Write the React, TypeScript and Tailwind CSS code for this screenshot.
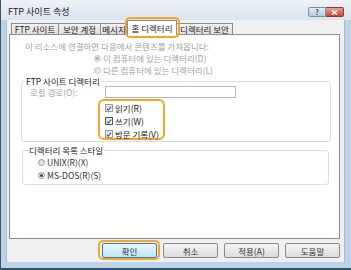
import React from "react";

function CheckBox({ green = false }: { green?: boolean }) {
  return (
    <span
      className={`w-[8px] h-[8px] shrink-0 flex items-center justify-center border ${
        green ? "border-[#3d5b80]" : "border-[#9a9a9a]"
      } bg-linear-to-br from-[#dcdcdc] to-[#fafafa]`}
    >
      <svg viewBox="0 0 8 8" className="w-[7px] h-[7px]">
        <path
          d="M1.2 4.2 L3.1 6.2 L6.9 1.4"
          stroke={green ? "#2f8a3c" : "#3a5a9a"}
          strokeWidth="1.4"
          fill="none"
        />
      </svg>
    </span>
  );
}

function Radio({ checked = false, disabled = false }: { checked?: boolean; disabled?: boolean }) {
  return (
    <span
      className={`w-[7px] h-[7px] shrink-0 rounded-full border flex items-center justify-center ${
        disabled ? "border-[#c4c4c4]" : "border-[#959595]"
      } bg-linear-to-br from-[#d8d8d8] to-[#f8f8f8]`}
    >
      {checked && (
        <span
          className={`w-[3px] h-[3px] rounded-full ${disabled ? "bg-[#a8a8a8]" : "bg-[#1f4c7a]"}`}
        />
      )}
    </span>
  );
}

function Btn({ label, focus = false }: { label: string; focus?: boolean }) {
  return (
    <div className="relative w-[55px] h-[15px]">
      <div
        className={`w-full h-full rounded-[2px] border flex items-center justify-center text-[8.5px] leading-[10px] text-[#333] ${
          focus
            ? "border-[#3c7fb1] bg-linear-to-b from-[#eaf6fd] to-[#bee6fd]"
            : "border-[#8c8c8c] bg-linear-to-b from-[#f4f4f4] to-[#dcdcdc]"
        }`}
      >
        {label}
      </div>
      {focus && (
        <div className="absolute -left-[4px] -right-[3px] -top-[3px] -bottom-[2px] border-2 border-[#f5a623] rounded-[5px]" />
      )}
    </div>
  );
}

function Tab({ label, w, selected = false }: { label: string; w: string; selected?: boolean }) {
  if (selected) {
    return (
      <div
        className={`relative z-10 ${w} h-[15px] -mb-[1px] -ml-[1px] bg-white border border-b-0 border-[#898c95] flex items-center justify-center text-[8.5px] leading-[10px] text-[#222] whitespace-nowrap`}
      >
        {label}
        <div className="absolute -left-[3px] -right-[4px] -top-[4px] -bottom-[3px] border-2 border-[#f5a623] rounded-[5px]" />
      </div>
    );
  }
  return (
    <div
      className={`${w} h-[11px] -ml-[1px] first:ml-0 border border-b-0 border-[#898c95] bg-linear-to-b from-[#f2f2f2] to-[#e0e0e0] flex items-center justify-center text-[8.5px] leading-[10px] text-[#222] whitespace-nowrap overflow-hidden`}
    >
      {label}
    </div>
  );
}

export default function App() {
  return (
    <div className="w-[351px] h-[270px] flex flex-col bg-[#bed3ea] border-l border-l-[#46515c] border-b-2 border-b-[#2e5868] font-[family-name:'Noto_Sans_CJK_KR','Noto_Sans',sans-serif] overflow-hidden">
      {/* Title bar */}
      <div className="h-[20px] shrink-0 flex items-start bg-linear-to-b from-[#eef2f6] to-[#dbe4ee]">
        <span className="ml-[7px] mt-[6px] text-[9px] leading-[12px] text-[#222]">FTP 사이트 속성</span>
        <div className="ml-auto mr-[7px] mt-[7px] flex">
          <div className="w-[18px] h-[10px] rounded-l-[2px] border border-[#7a8ea6] bg-linear-to-b from-[#e4ecf5] to-[#b7c9dd] flex items-center justify-center text-[7px] leading-[8px] text-[#2c3e55] font-bold">
            ?
          </div>
          <div className="w-[18px] h-[10px] rounded-r-[2px] border border-l-0 border-[#8c3a32] bg-linear-to-b from-[#e8a193] to-[#c5453a] flex items-center justify-center">
            <svg viewBox="0 0 8 6" className="w-[7px] h-[5px]">
              <path d="M1 0.5 L7 5.5 M7 0.5 L1 5.5" stroke="white" strokeWidth="1.6" />
            </svg>
          </div>
        </div>
      </div>

      {/* Middle */}
      <div className="flex flex-1 min-h-0">
        <div className="w-[5px] shrink-0" />
        <div className="w-[339px] shrink-0 bg-[#f0f0f0] border-x border-[#a9bdd3] flex flex-col pl-[2px] pr-[4px]">
          {/* Tabs */}
          <div className="h-[14px] shrink-0 flex items-end pl-[2px]">
            <Tab label="FTP 사이트" w="w-[48px]" />
            <Tab label="보안 계정" w="w-[43px]" />
            <Tab label="메시지" w="w-[28px]" />
            <Tab label="홈 디렉터리" w="w-[50px]" selected />
            <Tab label="디렉터리 보안" w="w-[57px]" />
          </div>

          {/* Panel */}
          <div className="h-[205px] shrink-0 bg-white border border-[#898c95] flex flex-col">
            <div className="mt-[6px] ml-[15px] h-[11px] text-[8.5px] leading-[11px] text-[#a3a3a3] whitespace-nowrap">
              이 리소스에 연결하면 다음에서 콘텐츠를 가져옵니다:
            </div>
            <div className="ml-[84px] h-[12px] flex items-center gap-[2px] text-[8.5px] leading-[12px] text-[#a3a3a3]">
              <Radio checked disabled />
              <span>이 컴퓨터에 있는 디렉터리(D)</span>
            </div>
            <div className="ml-[84px] h-[12px] flex items-center gap-[2px] text-[8.5px] leading-[12px] text-[#a3a3a3]">
              <Radio disabled />
              <span>다른 컴퓨터에 있는 디렉터리(L)</span>
            </div>

            {/* Group 1 */}
            <div className="mt-[5px] ml-[11px] w-[310px] h-[61px] shrink-0 border border-[#d5dfe5] rounded-[3px] flex flex-col">
              <span className="-mt-[7px] ml-[3px] px-[1px] w-fit bg-white text-[8.5px] leading-[12px] text-[#222]">
                FTP 사이트 디렉터리
              </span>
              <div className="-mt-[1px] h-[12px] flex items-center">
                <span className="ml-[8px] w-[75px] text-[8.5px] leading-[12px] text-[#a3a3a3]">로컬 경로(O):</span>
                <div className="w-[131px] h-[12px] border border-[#b5b9c0] bg-white" />
              </div>
              <div className="mt-[1px] ml-[76px] w-[67px] h-[41px] border-2 border-[#f5a623] rounded-[6px] flex flex-col gap-[1px] pl-[5px] pt-[1px]">
                <div className="h-[12px] flex items-center gap-[2px] text-[8.5px] leading-[12px] text-[#222] whitespace-nowrap">
                  <CheckBox />
                  <span>읽기(R)</span>
                </div>
                <div className="h-[12px] flex items-center gap-[2px] text-[8.5px] leading-[12px] text-[#222] whitespace-nowrap">
                  <CheckBox green />
                  <span>쓰기(W)</span>
                </div>
                <div className="h-[12px] flex items-center gap-[2px] text-[8.5px] leading-[12px] text-[#222] whitespace-nowrap">
                  <CheckBox />
                  <span>방문 기록(V)</span>
                </div>
              </div>
            </div>

            {/* Group 2 */}
            <div className="mt-[8px] ml-[12px] w-[307px] h-[35px] shrink-0 border border-[#d5dfe5] rounded-[3px] flex flex-col">
              <span className="-mt-[7px] ml-[5px] px-[1px] w-fit bg-white text-[8.5px] leading-[12px] text-[#222]">
                디렉터리 목록 스타일
              </span>
              <div className="flex flex-col gap-[1px] pl-[15px]">
                <div className="h-[12px] flex items-center gap-[2px] text-[8.5px] leading-[12px] text-[#333]">
                  <Radio />
                  <span>UNIX(R)(X)</span>
                </div>
                <div className="h-[12px] flex items-center gap-[2px] text-[8.5px] leading-[12px] text-[#333]">
                  <Radio checked />
                  <span>MS-DOS(R)(S)</span>
                </div>
              </div>
            </div>
          </div>

          {/* Buttons */}
          <div className="mt-[4px] flex justify-end gap-[6px]">
            <Btn label="확인" focus />
            <Btn label="취소" />
            <Btn label="적용(A)" />
            <Btn label="도움말" />
          </div>
        </div>
        <div className="flex-1" />
      </div>
      <div className="h-[6px] shrink-0" />
    </div>
  );
}
